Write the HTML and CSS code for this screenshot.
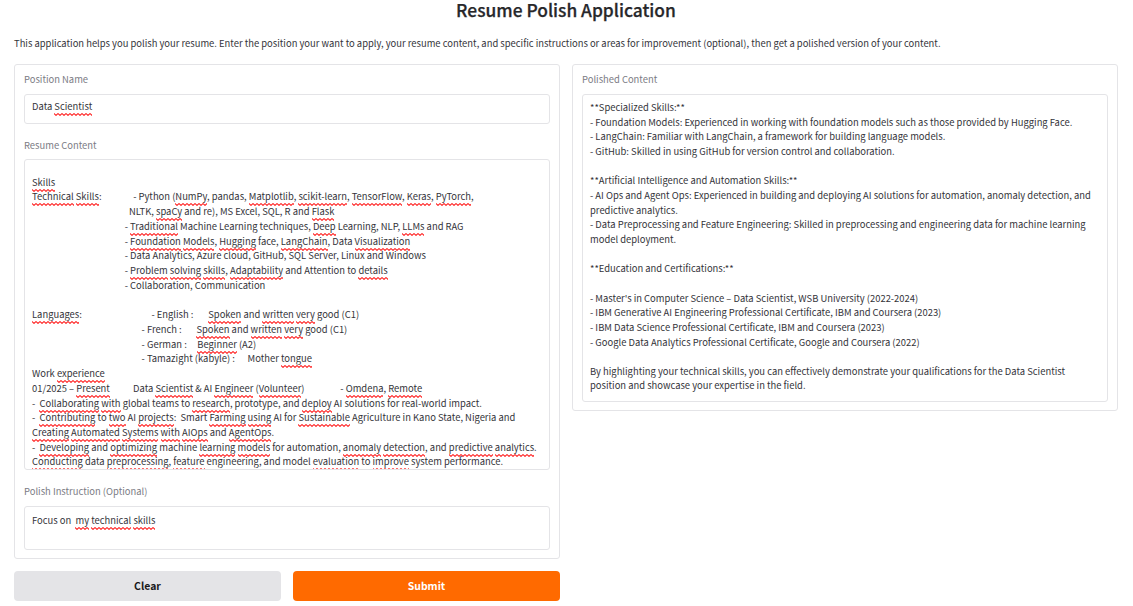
FILE: index.html
```html
<!DOCTYPE html>
<html lang="en">
<head>
<meta charset="utf-8">
<title>Resume Polish Application</title>
<link rel="stylesheet" href="styles.css">
</head>
<body>
<main class="app">
<h1 class="title">Resume Polish Application</h1>
<p class="intro">This application helps you polish your resume. Enter the position your want to apply, your resume content, and specific instructions or areas for improvement (optional), then get a polished version of your content.</p>
<div class="columns">
<section class="column">
<div class="card">
<div class="field">
<div class="label">Position Name</div>
<div class="box box-position">Data <u>Scientist</u></div>
</div>
<div class="field">
<div class="label label-resume">Resume Content</div>
<div class="box box-resume">
<div class="line"> </div>
<div class="line"><u>Skills</u></div>
<div class="line"><u>Technical</u> <u>Skills</u>:               - Python (<u>NumPy</u>, pandas, <u>Matplotlib</u>, <u>scikit-learn</u>, <u>TensorFlow</u>, <u>Keras</u>, <u>PyTorch</u>,</div>
<div class="line">                                              NLTK, <u>spaCy</u> and re), MS Excel, SQL, R and <u>Flask</u></div>
<div class="line">                                            - <u>Traditional</u> Machine Learning techniques, <u>Deep</u> Learning, NLP, <u>LLMs</u> and RAG</div>
<div class="line">                                            - <u>Foundation</u> <u>Models</u>, <u>Hugging</u> face, <u>LangChain</u>, Data <u>Visualization</u></div>
<div class="line">                                            - Data Analytics, Azure cloud, GitHub, SQL Server, Linux and Windows</div>
<div class="line">                                            - <u>Problem</u> <u>solving</u> <u>skills</u>, <u>Adaptability</u> and Attention to <u>details</u></div>
<div class="line">                                            - Collaboration, Communication</div>
<div class="line"> </div>
<div class="line"><u>Languages</u>:                                 - English :       <u>Spoken</u> and <u>written</u> <u>very</u> good (C1)</div>
<div class="line">                                                    - French :       <u>Spoken</u> and <u>written</u> <u>very</u> good (C1)</div>
<div class="line">                                                    - German :     <u>Beginner</u> (A2)</div>
<div class="line">                                                    - Tamazight (kabyle) :      Mother <u>tongue</u></div>
<div class="line">Work <u>experience</u></div>
<div class="line">01/2025 – <u>Present</u>           Data <u>Scientist</u> &amp; AI <u>Engineer</u> (<u>Volunteer</u>)                 - <u>Omdena</u>, <u>Remote</u></div>
<div class="line">-  <u>Collaborating</u> <u>with</u> global teams to <u>research</u>, prototype, and <u>deploy</u> AI solutions for real-world impact.</div>
<div class="line">-  <u>Contributing</u> to <u>two</u> AI <u>projects</u>:  Smart <u>Farming</u> <u>using</u> AI for <u>Sustainable</u> Agriculture in Kano State, Nigeria and</div>
<div class="line"><u>Creating</u> <u>Automated</u> <u>Systems</u> <u>with</u> <u>AIOps</u> and <u>AgentOps</u>.</div>
<div class="line">-  <u>Developing</u> and <u>optimizing</u> machine <u>learning</u> <u>models</u> for automation, <u>anomaly</u> <u>detection</u>, and <u>predictive</u> <u>analytics</u>.</div>
<div class="line"><u>Conducting</u> data <u>preprocessing</u>, <u>feature</u> engineering, and model <u>evaluation</u> to <u>improve</u> system performance.</div>
</div>
</div>
<div class="field">
<div class="label">Polish Instruction (Optional)</div>
<div class="box box-instruction">Focus on  <u>my</u> <u>technical</u> <u>skills</u></div>
</div>
</div>
<div class="actions">
<button class="button clear">Clear</button>
<button class="button submit">Submit</button>
</div>
</section>
<section class="column">
<div class="card">
<div class="field">
<div class="label">Polished Content</div>
<div class="box box-output">
<div class="line">**Specialized Skills:**</div>
<div class="line">- Foundation Models: Experienced in working with foundation models such as those provided by Hugging Face.</div>
<div class="line">- LangChain: Familiar with LangChain, a framework for building language models.</div>
<div class="line">- GitHub: Skilled in using GitHub for version control and collaboration.</div>
<div class="line"> </div>
<div class="line">**Artificial Intelligence and Automation Skills:**</div>
<div class="line">- AI Ops and Agent Ops: Experienced in building and deploying AI solutions for automation, anomaly detection, and</div>
<div class="line">predictive analytics.</div>
<div class="line">- Data Preprocessing and Feature Engineering: Skilled in preprocessing and engineering data for machine learning</div>
<div class="line">model deployment.</div>
<div class="line"> </div>
<div class="line">**Education and Certifications:**</div>
<div class="line"> </div>
<div class="line">- Master's in Computer Science – Data Scientist, WSB University (2022-2024)</div>
<div class="line">- IBM Generative AI Engineering Professional Certificate, IBM and Coursera (2023)</div>
<div class="line">- IBM Data Science Professional Certificate, IBM and Coursera (2023)</div>
<div class="line">- Google Data Analytics Professional Certificate, Google and Coursera (2022)</div>
<div class="line"> </div>
<div class="line">By highlighting your technical skills, you can effectively demonstrate your qualifications for the Data Scientist</div>
<div class="line">position and showcase your expertise in the field.</div>
</div>
</div>
</div>
</section>
</div>
</main>
</body>
</html>
```
FILE: styles.css
```css
* { box-sizing: border-box; }
body {
  margin: 0;
  background: #fff;
  color: #34343a;
  font: 9.41px/14.66px "Noto Sans CJK SC", "Noto Sans", sans-serif;
}
.app { width: 1133px; padding: 0 15px 0 14px; }
.title {
  margin: 0;
  height: 36px;
  color: #27272a;
  font-size: 17.39px;
  font-weight: 500;
  line-height: 20px;
  text-align: center;
  -webkit-text-stroke: .25px #27272a;
}
.intro { margin: 0; height: 28px; white-space: nowrap; }
.columns { display: grid; grid-template-columns: 546px 546px; gap: 12px; align-items: start; }
.card {
  display: flex;
  flex-direction: column;
  gap: 14px;
  padding: 7px 9px 8px;
  border: 1px solid #e4e4e7;
  border-radius: 3px;
}
.label { height: 22px; color: #7b7b84; }
.label-resume { height: 21px; }
.box {
  overflow: hidden;
  padding: 4px 7px 0;
  border: 1px solid #e4e4e7;
  border-radius: 3px;
  white-space: pre;
}
.box-position { height: 30px; }
.box-resume { height: 311px; padding-top: 0; white-space: normal; line-height: 14.72px; }
.box-instruction { height: 44px; padding-top: 6px; }
.box-output { height: 308px; padding-top: 5px; white-space: normal; }
.line { height: 14.66px; white-space: pre; }
.box-resume .line { height: 14.72px; }
u {
  padding-bottom: 3px;
  text-decoration: none;
  background: url("data:image/svg+xml,%3Csvg xmlns='http://www.w3.org/2000/svg' width='4' height='3'%3E%3Cpath d='M-1 1.5L0 .6L2 2.4L4 .6L5 1.5' fill='none' stroke='%23ff2020' stroke-width='1.1'/%3E%3C/svg%3E") left bottom / 4px 3px repeat-x;
}
.actions { display: flex; gap: 12px; margin-top: 12px; }
.button {
  flex: 1;
  height: 30px;
  padding: 0;
  border: 0;
  border-radius: 4px;
  font: 700 10.45px/30px "Noto Sans CJK SC", "Noto Sans", sans-serif;
}
.clear { background: #e4e4e7; color: #18181b; }
.submit { background: #ff6a00; color: #fff; }
```
